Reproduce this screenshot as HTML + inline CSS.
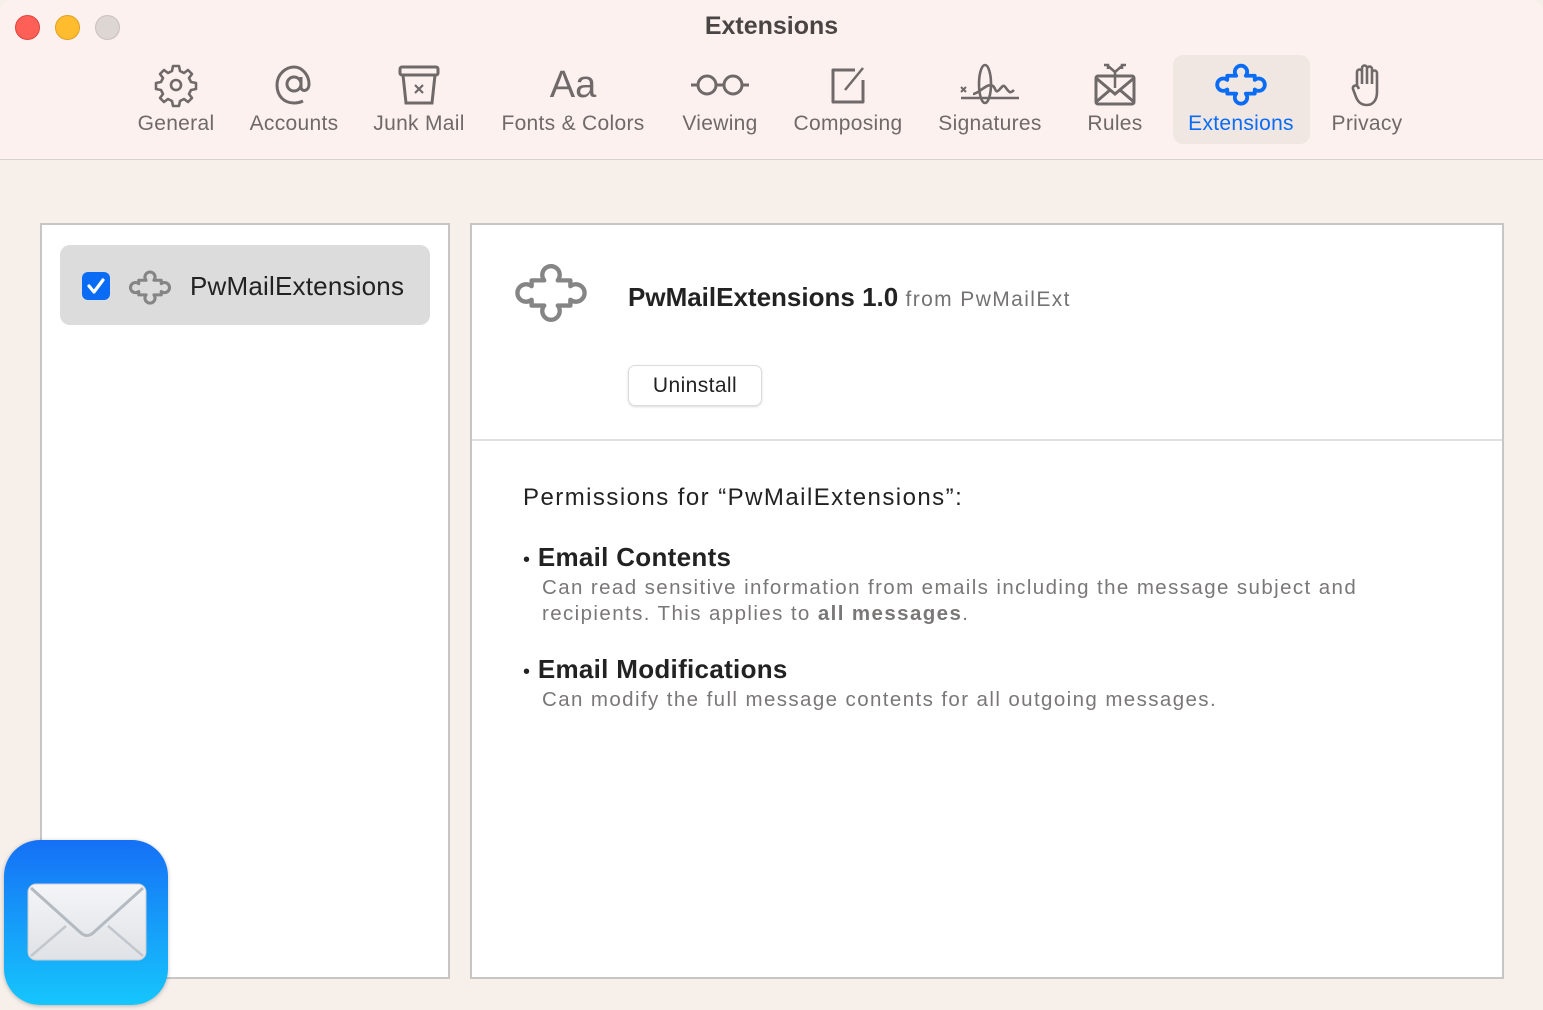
<!DOCTYPE html>
<html><head><meta charset="utf-8"><style>
*{margin:0;padding:0;box-sizing:border-box}
body{width:1543px;height:1010px;background:#f6efea;font-family:"Liberation Sans",sans-serif;position:relative;overflow:hidden}
.hdr{position:absolute;left:0;top:0;width:1543px;height:160px;background:#fcf1ee;border-bottom:1px solid #d8d2cf;border-radius:12px 12px 0 0}
.dot{position:absolute;top:15px;width:25px;height:25px;border-radius:50%}
.title{position:absolute;top:12px;left:0;width:1543px;text-align:center;font-weight:bold;font-size:25px;color:#4a4545}
.lbl{position:absolute;top:112px;font-size:21px;letter-spacing:0.3px;color:#6f6a69;transform:translateX(-50%);white-space:nowrap}
.ic{position:absolute;top:62px;transform:translateX(-50%)}
.sel{position:absolute;left:1173px;top:55px;width:137px;height:89px;background:#f0e7e3;border-radius:10px}
.panel{position:absolute;background:#fff;border:2px solid #c8c6c5}
.g{color:#747272}
.d{position:absolute;left:70px;font-size:20.5px;letter-spacing:1.4px;color:#7a7777;line-height:26px;white-space:nowrap}
</style></head><body>
<div class="hdr">
<div class="dot" style="left:15px;background:#fe5f57;border:1px solid #e0443e"></div>
<div class="dot" style="left:55px;background:#febc2e;border:1px solid #dea123"></div>
<div class="dot" style="left:95px;background:#ddd6d3;border:1px solid #c9c2bf"></div>
<div class="title">Extensions</div>
<div class="sel"></div>
<svg class="ic" style="left:176px" width="46" height="46" viewBox="0 0 46 46" fill="none" stroke="#6f6a69" stroke-width="2.6"><path d="M20 4h6l1 5 4 2 4-3 4 4-3 4 2 4 5 1v6l-5 1-2 4 3 4-4 4-4-3-4 2-1 5h-6l-1-5-4-2-4 3-4-4 3-4-2-4-5-1v-6l5-1 2-4-3-4 4-4 4 3 4-2z" stroke-linejoin="round"/><circle cx="23" cy="23" r="5"/></svg>
<div class="lbl" style="left:176px">General</div>
<svg class="ic" style="left:294px" width="46" height="46" viewBox="0 0 46 46" fill="none" stroke="#6f6a69" stroke-width="3"><circle cx="23" cy="22" r="7"/><path d="M30 15v10c0 5 8 5 8-3 0-9-7-17-15-17S6 12 6 23s7 18 17 18c4 0 7-1 9-2"/></svg>
<div class="lbl" style="left:294px">Accounts</div>
<svg class="ic" style="left:419px" width="46" height="46" viewBox="0 0 46 46" fill="none" stroke="#6f6a69" stroke-width="3"><rect x="4" y="5" width="38" height="8" rx="2"/><path d="M7 13l3 28h26l3-28"/><path d="M19 23l8 8M27 23l-8 8" stroke-width="2.2"/></svg>
<div class="lbl" style="left:419px">Junk Mail</div>
<div class="ic" style="left:573px;top:62px;font-size:38px;color:#6f6a69;line-height:46px">Aa</div>
<div class="lbl" style="left:573px">Fonts &amp; Colors</div>
<svg class="ic" style="left:720px" width="62" height="46" viewBox="0 0 62 46" fill="none" stroke="#6f6a69" stroke-width="3"><circle cx="18" cy="23" r="9"/><circle cx="44" cy="23" r="9"/><path d="M27 23h8M9 23H2M53 23h7"/></svg>
<div class="lbl" style="left:720px">Viewing</div>
<svg class="ic" style="left:848px" width="46" height="46" viewBox="0 0 46 46" fill="none" stroke="#6f6a69" stroke-width="3"><path d="M30 8H8v32h30V18" stroke-linejoin="round"/><path d="M20 28l18-22" stroke-width="2.5"/></svg>
<div class="lbl" style="left:848px">Composing</div>
<svg class="ic" style="left:990px" width="62" height="46" viewBox="0 0 62 46" fill="none" stroke="#6f6a69" stroke-width="2.6"><path d="M2 25l5 5M7 25l-5 5" stroke-width="2"/><ellipse cx="26" cy="22" rx="6" ry="19"/><path d="M14 32c6 0 14-12 20-8 3 2 2 8 6 4s4-6 7-2 4 6 8 2"/><path d="M2 36h58"/></svg>
<div class="lbl" style="left:990px">Signatures</div>
<svg class="ic" style="left:1115px" width="46" height="46" viewBox="0 0 46 46" fill="none" stroke="#6f6a69" stroke-width="3"><rect x="4" y="14" width="38" height="28" rx="2"/><path d="M4 16l19 16 19-16M4 40l14-12M42 40L28 28"/><path d="M23 26V10l-8-7M23 10l8-7M12 3h4v4M34 3h-4v4" stroke-width="2.5"/></svg>
<div class="lbl" style="left:1115px">Rules</div>
<svg class="ic" style="left:1241px" width="60" height="44" viewBox="-2 -2 84 64" fill="none" stroke="#0a6cf5" stroke-width="5.5"><path d="M20 18H33A9 9 0 1 1 47 18H60V24A9 9 0 1 1 60 38V44H47A9 9 0 1 1 33 44H20V38A9 9 0 1 1 20 24Z" stroke-linejoin="round"/></svg>
<div class="lbl" style="left:1241px;color:#0a6cf5">Extensions</div>
<svg class="ic" style="left:1367px" width="46" height="46" viewBox="0 0 46 46" fill="none" stroke="#6f6a69" stroke-width="2.6"><path d="M13 24V10a2.5 2.5 0 0 1 5 0V22M18 22V6a2.5 2.5 0 0 1 5 0v16M23 22V7a2.5 2.5 0 0 1 5 0v15M28 22V11a2.5 2.5 0 0 1 5 0v19c0 8-4 13-10 13s-9-3-11-8l-3-8c-1-3 3-5 5-2l1 2" stroke-linejoin="round"/></svg>
<div class="lbl" style="left:1367px">Privacy</div>
</div>

<div class="panel" style="left:40px;top:223px;width:410px;height:756px">
 <div style="position:absolute;left:18px;top:20px;width:370px;height:80px;background:#dcdcdc;border-radius:10px"></div>
 <div style="position:absolute;left:40px;top:47px;width:28px;height:28px;background:#0a6cf5;border-radius:6px"><svg width="28" height="28" viewBox="0 0 28 28"><path d="M7 14l5 6 9-12" fill="none" stroke="#fff" stroke-width="3.2" stroke-linecap="round" stroke-linejoin="round"/></svg></div>
 <svg style="position:absolute;left:84px;top:44px" width="48" height="36" viewBox="-2 -2 84 64" fill="none" stroke="#858585" stroke-width="5.5"><path d="M20 18H33A9 9 0 1 1 47 18H60V24A9 9 0 1 1 60 38V44H47A9 9 0 1 1 33 44H20V38A9 9 0 1 1 20 24Z" stroke-linejoin="round"/></svg>
 <div style="position:absolute;left:148px;top:46px;font-size:26px;letter-spacing:0.2px;color:#222">PwMailExtensions</div>
</div>

<div class="panel" style="left:470px;top:223px;width:1034px;height:756px">
 <svg style="position:absolute;left:36px;top:36px" width="86" height="62" viewBox="-2 -2 84 64" fill="none" stroke="#858585" stroke-width="4.5"><path d="M20 18H33A9 9 0 1 1 47 18H60V24A9 9 0 1 1 60 38V44H47A9 9 0 1 1 33 44H20V38A9 9 0 1 1 20 24Z" stroke-linejoin="round"/></svg>
 <div style="position:absolute;left:156px;top:57px;font-size:26px;color:#222;white-space:nowrap"><b>PwMailExtensions 1.0</b> <span class="g" style="font-size:21px;letter-spacing:1.4px">from PwMailExt</span></div>
 <div style="position:absolute;left:156px;top:140px;width:134px;height:41px;border:1px solid #dcdcdc;border-radius:7px;box-shadow:0 1px 2px rgba(0,0,0,.15);font-size:21px;letter-spacing:0.4px;color:#222;text-align:center;line-height:39px">Uninstall</div>
 <div style="position:absolute;left:0;top:214px;width:1030px;height:2px;background:#e0e0e0"></div>
 <div style="position:absolute;left:51px;top:259px;font-size:24px;letter-spacing:1.45px;color:#222">Permissions for “PwMailExtensions”:</div>
 <div style="position:absolute;left:51px;top:317px;font-size:26px;color:#222;letter-spacing:0.3px"><span style="font-size:20px">•</span> <b>Email Contents</b></div>
 <div class="d" style="top:350px">Can read sensitive information from emails including the message subject and<br>recipients. This applies to <b>all messages</b>.</div>
 <div style="position:absolute;left:51px;top:429px;font-size:26px;color:#222;letter-spacing:0.3px"><span style="font-size:20px">•</span> <b>Email Modifications</b></div>
 <div class="d" style="top:462px">Can modify the full message contents for all outgoing messages.</div>
</div>

<div style="position:absolute;left:4px;top:840px;width:164px;height:165px;border-radius:36px;background:linear-gradient(#1570f6,#16c6fc);box-shadow:0 1px 4px rgba(0,0,0,.25)">
 <svg style="position:absolute;left:22px;top:42px" width="122" height="80" viewBox="0 0 122 80"><defs><linearGradient id="e" x1="0" y1="0" x2="0" y2="1"><stop offset="0" stop-color="#f4f5f7"/><stop offset="1" stop-color="#dfe2e6"/></linearGradient></defs><rect x="2" y="2" width="118" height="76" rx="8" fill="url(#e)" stroke="#c7ccd2"/><path d="M5 6l50 45q6 5 12 0l50-45" fill="none" stroke="#b4bac2" stroke-width="3"/><path d="M5 74l35-30M117 74L82 44" stroke="#c2c7cd" stroke-width="2.5"/></svg>
</div>
</body></html>
